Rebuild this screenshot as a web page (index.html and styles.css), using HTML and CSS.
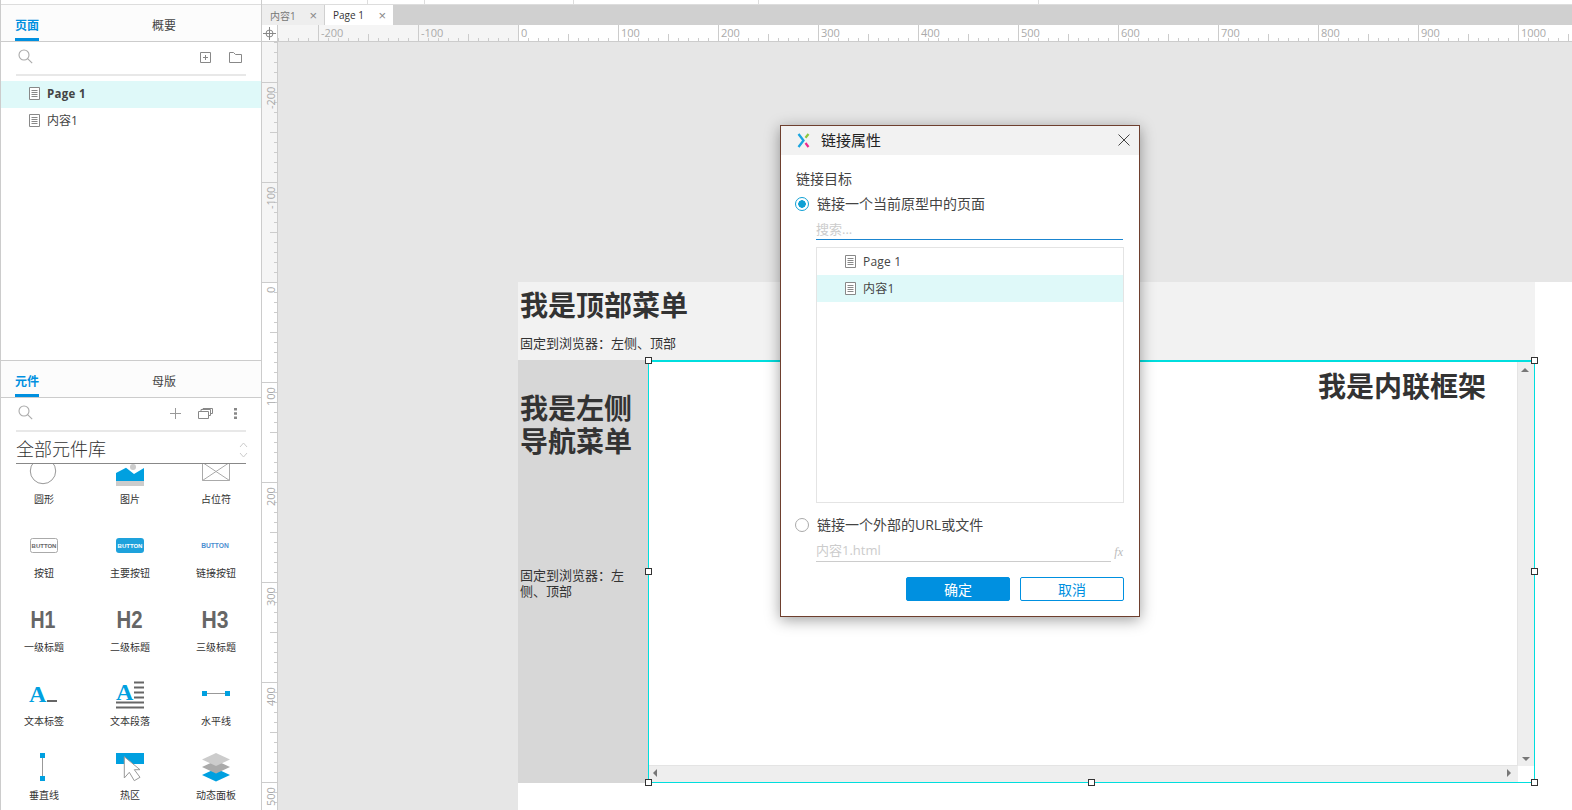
FILE: index.html
```html
<!DOCTYPE html>
<html lang="zh-CN">
<head>
<meta charset="utf-8">
<title>链接属性</title>
<link rel="stylesheet" href="styles.css">
</head>
<body>
<svg class="defs" width="0" height="0">
  <symbol id="doc" viewBox="0 0 11 13"><path d="M.5.5h10v12H.5z" fill="#fff" stroke="#888"/><path d="M2.5 3.5h6M2.5 5.5h6M2.5 7.5h6M2.5 9.5h6" stroke="#888" fill="none"/></symbol>
  <symbol id="search" viewBox="0 0 15 15"><circle cx="6" cy="6" r="5" fill="none" stroke="#aaa" stroke-width="1.1"/><path d="M9.6 9.6l4.6 4.6" stroke="#aaa" stroke-width="1.1"/></symbol>
</svg>
<div class="app">
  <aside class="rail">
    <div class="railtop"></div>
    <section class="pages">
      <div class="tabs"><span class="tab on">页面</span><span class="tab">概要</span></div>
      <div class="tools">
        <svg class="ic15" viewBox="0 0 15 15"><use href="#search"/></svg>
        <span class="spacer"></span>
        <svg class="tool1" width="11" height="11" viewBox="0 0 11 11"><path d="M.5.5h10v10H.5z" fill="none" stroke="#888"/><path d="M5.5 3v5M3 5.5h5" stroke="#888"/></svg>
        <svg class="tool2" width="13" height="11" viewBox="0 0 13 11"><path d="M.5 10.5V.5h4l2 2h6v8z" fill="none" stroke="#888"/></svg>
      </div>
      <div class="row sel"><svg class="doc" width="11" height="13"><use href="#doc"/></svg><b>Page 1</b></div>
      <div class="row"><svg class="doc" width="11" height="13"><use href="#doc"/></svg><span>内容1</span></div>
    </section>
    <section class="lib">
      <div class="tabs"><span class="tab on">元件</span><span class="tab">母版</span></div>
      <div class="tools">
        <svg class="ic15" viewBox="0 0 15 15"><use href="#search"/></svg>
        <span class="spacer"></span>
        <svg class="tool3" width="11" height="11" viewBox="0 0 11 11"><path d="M5.5 0v11M0 5.5h11" stroke="#999"/></svg>
        <svg class="tool4" width="15" height="11" viewBox="0 0 15 11"><path d="M.5 3.5h10v7H.5zM3 3.5V1.5h9.500v6H10.500M5 1.500V.5h9.500v5h-2" fill="none" stroke="#888"/></svg>
        <svg class="tool5" width="3" height="11" viewBox="0 0 3 11"><path d="M0 0h3v2.500H0zM0 4.200h3v2.500H0zM0 8.500h3V11H0z" fill="#888"/></svg>
      </div>
      <div class="select"><span>全部元件库</span>
        <svg width="9" height="16" viewBox="0 0 9 16"><path d="M1 5l3.500-4L8 5M1 11l3.500 4L8 11" fill="none" stroke="#ccc"/></svg>
      </div>
      <div class="scroll">
        <div class="grid">
          <div class="item"><svg viewBox="1 0 30 34"><circle cx="15" cy="17" r="12.700" fill="none" stroke="#999"/></svg><span>圆形</span></div>
          <div class="item"><svg viewBox="1 0 30 34"><circle cx="19" cy="13" r="3" fill="#ccc"/><path d="M2 19l10-5.300L20 20l10-6v13H2z" fill="#00a0e0"/><path d="M2 27h28v5H2z" fill="#ccc"/></svg><span>图片</span></div>
          <div class="item"><svg viewBox="1 0 30 34"><path d="M2.500 8.500h27v18h-27zM2.500 8.500l27 18M29.500 8.500l-27 18" fill="none" stroke="#aaa"/></svg><span>占位符</span></div>

          <div class="item"><svg viewBox="1 0 30 34"><rect x="2.500" y="10.500" width="27" height="14" rx="2" fill="#fff" stroke="#aaa"/><text class="btxt" x="16" y="19.800" fill="#666">BUTTON</text></svg><span>按钮</span></div>
          <div class="item"><svg viewBox="1 0 30 34"><rect x="2" y="10" width="28" height="15" rx="3" fill="#1ea2dc"/><text class="btxt" x="16" y="20" fill="#fff">BUTTON</text></svg><span>主要按钮</span></div>
          <div class="item"><svg viewBox="1 0 30 34"><text class="btxt lnk" x="15" y="19.800" fill="#4a8ed0">BUTTON</text></svg><span>链接按钮</span></div>

          <div class="item"><svg viewBox="1 0 30 34"><text class="htxt" x="15" y="26" textLength="25" lengthAdjust="spacingAndGlyphs">H1</text></svg><span>一级标题</span></div>
          <div class="item"><svg viewBox="1 0 30 34"><text class="htxt" x="15.500" y="26" textLength="26" lengthAdjust="spacingAndGlyphs">H2</text></svg><span>二级标题</span></div>
          <div class="item"><svg viewBox="1 0 30 34"><text class="htxt" x="15" y="26" textLength="27" lengthAdjust="spacingAndGlyphs">H3</text></svg><span>三级标题</span></div>

          <div class="item"><svg viewBox="1 0 30 34"><text class="atxt" x="1" y="26">A</text><path d="M19 24h10v2H19z" fill="#666"/></svg><span>文本标签</span></div>
          <div class="item"><svg viewBox="1 0 30 34"><text class="atxt" x="2" y="24">A</text><path d="M20 5.500h10v2H20zM20 10.500h10v2H20zM20 15.500h10v2H20zM20 20.500h10v2H20zM2 25.500h28v2H2zM2 30.500h28v2H2z" fill="#666"/></svg><span>文本段落</span></div>
          <div class="item"><svg viewBox="1 0 30 34"><path d="M4 17.500h24" stroke="#999"/><path d="M2 15h5v5H2zM25 15h5v5h-5z" fill="#00a0e0"/></svg><span>水平线</span></div>

          <div class="item"><svg viewBox="1 0 30 34"><path d="M14.500 6v24" stroke="#999"/><path d="M12 3h5v5h-5zM12 26h5v5h-5z" fill="#00a0e0"/></svg><span>垂直线</span></div>
          <div class="item"><svg viewBox="1 0 30 34"><path d="M2 3h28v11H2z" fill="#00a0e0"/><path d="M10.300 6.700V28l5-5.700 5 8.400 5.700-3.400-5.700-7.600H26z" fill="#fff" stroke="#999"/></svg><span>热区</span></div>
          <div class="item"><svg viewBox="1 0 30 34"><path d="M2 25l14-6.500L30 25l-14 6.500z" fill="#00a0e0"/><path d="M2 17l14-6.500L30 17l-14 6.500z" fill="#aaa"/><path d="M2 9.500L16 3l14 6.500L16 16z" fill="#ccc"/></svg><span>动态面板</span></div>
        </div>
      </div>
    </section>
  </aside>

  <main class="work">
    <div class="strip"><i class="s1"></i><i class="s2"></i><i class="s3"></i><i class="s4"></i><i class="s5"></i></div>
    <div class="doctabs">
      <div class="dtab"><span>内容1</span><em>×</em></div>
      <div class="dtab cur"><span>Page 1</span><em>×</em></div>
    </div>
    <div class="rulerrow">
      <div class="corner"><svg width="13" height="13" viewBox="0 0 13 13"><circle cx="6.500" cy="6.500" r="3.500" fill="none" stroke="#888"/><path d="M6.500 0v13M0 6.500h13" stroke="#888"/></svg></div>
      <div class="hruler">
        <span>-200</span><span>-100</span><span>0</span><span>100</span><span>200</span><span>300</span><span>400</span><span>500</span><span>600</span><span>700</span><span>800</span><span>900</span><span>1000</span>
      </div>
    </div>
    <div class="stage">
      <div class="vruler">
        <span>-200</span><span>-100</span><span>0</span><span>100</span><span>200</span><span>300</span><span>400</span><span>500</span>
      </div>
      <div class="canvas">
        <div class="page">
          <div class="topbar">
            <h2>我是顶部菜单</h2>
            <p>固定到浏览器：左侧、顶部</p>
          </div>
          <div class="pagerow">
            <div class="nav">
              <h2>我是左侧<br>导航菜单</h2>
              <p>固定到浏览器：左侧、顶部</p>
            </div>
            <div class="frame">
              <h2>我是内联框架</h2>
              <div class="vbar"><i class="up"></i><i class="down"></i></div>
              <div class="hbar"><i class="left"></i><i class="right"></i></div>
              <i class="h tl"></i><i class="h tr"></i><i class="h ml"></i><i class="h mr"></i><i class="h bl"></i><i class="h bm"></i><i class="h br"></i>
            </div>
          </div>
        </div>
      </div>
    </div>
  </main>
</div>

<div class="dialog">
  <header class="dlghead">
    <svg class="logo" width="13" height="15" viewBox="0 0 13 15"><path d="M1.500 1L6.500 7.500 1.500 14" fill="none" stroke="#1aa5e0" stroke-width="2.300"/><path d="M11.500 1L8.500 4.800" fill="none" stroke="#8cc63f" stroke-width="2.200"/><path d="M8.500 10l3 4" fill="none" stroke="#ec2a8c" stroke-width="2.200"/></svg>
    <span class="dlgtitle">链接属性</span>
    <svg class="close" width="12" height="12" viewBox="0 0 12 12"><path d="M.5.500l11 11M11.500.500l-11 11" stroke="#444"/></svg>
  </header>
  <div class="dlgbody">
    <div class="lbl">链接目标</div>
    <div class="radio"><i class="dot on"></i><span>链接一个当前原型中的页面</span></div>
    <div class="field active">搜索...</div>
    <div class="tree">
      <div class="node"><svg class="doc" width="11" height="13"><use href="#doc"/></svg><span>Page 1</span></div>
      <div class="node sel"><svg class="doc" width="11" height="13"><use href="#doc"/></svg><span>内容1</span></div>
    </div>
    <div class="radio second"><i class="dot"></i><span>链接一个外部的URL或文件</span></div>
    <div class="urlrow"><div class="field url">内容1.html</div><span class="fx">fx</span></div>
    <div class="btns"><button class="btn primary">确定</button><button class="btn">取消</button></div>
  </div>
</div>
</body>
</html>
```
FILE: styles.css
```css
* { box-sizing: border-box; }
html, body { margin: 0; height: 810px; overflow: hidden; background: #fff; }
body { font-family: "Open Sans", "Noto Sans CJK SC", sans-serif; color: #333; font-size: 12px; position: relative; }
.defs { position: absolute; }
.app { display: flex; width: 1572px; height: 810px; }

/* left rail */
.rail { width: 262px; flex: none; display: flex; flex-direction: column; border-left: 1px solid #ccc; border-right: 1px solid #ccc; background: #fff; }
.railtop { height: 5px; border-bottom: 1px solid #ddd; flex: none; }
.pages { height: 356px; flex: none; border-bottom: 1px solid #ccc; }
.tabs { height: 37px; display: flex; background: #fcfcfc; border-bottom: 1px solid #ccc; padding-left: 14px; }
.tab { width: 24px; margin-right: 113px; font-size: 12px; line-height: 42px; height: 36px; white-space: nowrap; color: #444; }
.tab.on { color: #0090e0; border-bottom: 3px solid #0090e0; font-weight: 700; }
.tools { height: 34px; margin: 0 15px; display: flex; align-items: center; border-bottom: 2px solid #e8e8e8; padding: 0 4px 2px 2px; }
.ic15 { width: 15px; height: 15px; margin-top: -2px; }
.spacer { flex: 1; }
.tool2 { margin-left: 18px; }
.tool4 { margin-left: 17px; }
.tool5 { margin-left: 21px; margin-right: 5px; }
.row { height: 27px; display: flex; align-items: center; padding: 0 0 2px 28px; font-size: 11.500px; line-height: 16px; color: #444; }
.pages .tools + .row { margin-top: 5px; }
.row.sel { background: #dff9f9; }
.row b { font-weight: 700; letter-spacing: .3px; }
.row span { font-size: 12px; }
.doc { flex: none; margin-right: 7px; }
.lib { flex: 1; display: flex; flex-direction: column; min-height: 0; }
.select { height: 32px; margin: 0 15px; border-bottom: 1px solid #888; display: flex; align-items: center; justify-content: space-between; font-size: 18px; font-weight: 300; color: #333; flex: none; }
.select svg { margin-right: -2px; margin-top: 4px; }
.scroll { flex: 1; overflow: hidden; min-height: 0; }
.grid { margin-top: -10px; display: grid; grid-template-columns: repeat(3, 86px); grid-auto-rows: 74px; }
.item { display: flex; flex-direction: column; align-items: center; }
.item svg { width: 30px; height: 34px; flex: none; overflow: visible; }
.item span { font-size: 10px; line-height: 14px; margin-top: 4px; color: #333; }
.btxt { font: 700 6px "Liberation Sans", sans-serif; text-anchor: middle; }
.btxt.lnk { font-size: 6.700px; }
.htxt { font: 700 24px "Liberation Sans", sans-serif; text-anchor: middle; fill: #666; }
.atxt { font: 700 24px "Liberation Serif", serif; fill: #00a0e0; }

/* workspace */
.work { flex: 1; min-width: 0; display: flex; flex-direction: column; }
.strip { height: 5px; flex: none; display: flex; border-bottom: 1px solid #ddd; }
.strip i { display: block; border-right: 1px solid #ddd; height: 4px; }
.s1 { width: 106px; }
.s2 { width: 57px; }
.s3 { width: 149px; }
.s4 { width: 185px; }
.s5 { width: 280px; }
.doctabs { height: 20px; flex: none; background: #d0d0d0; display: flex; }
.dtab { width: 62px; background: #eee; color: #777; display: flex; align-items: center; justify-content: space-between; padding: 0 7px 0 8px; font-size: 10px; margin-right: 1px; }
.dtab.cur { width: 68px; background: #fff; color: #333; }
.dtab em { font: normal 13px "Liberation Sans", sans-serif; color: #888; }
.rulerrow { height: 17px; flex: none; display: flex; border-bottom: 1px solid #ccc; }
.corner { width: 16px; flex: none; background: #fff; border-right: 1px solid #ccc; display: flex; align-items: center; justify-content: center; }
.hruler { flex: 1; display: flex; overflow: hidden; padding-left: 40px; color: #aaa; font-size: 11px; line-height: 15px;
  background:
    linear-gradient(90deg, #ccc 1px, transparent 1px) 40px 0 / 100px 100% repeat-x,
    linear-gradient(90deg, #ccc 1px, transparent 1px) 90px 100% / 100px 7px repeat-x,
    linear-gradient(90deg, #ccc 1px, transparent 1px) 0 100% / 10px 3px repeat-x,
    linear-gradient(90deg, #f5f5f5 240px, #fff 240px);
}
.hruler span { width: 100px; flex: none; padding-left: 3px; }
.stage { flex: 1; display: flex; min-height: 0; }
.vruler { width: 16px; flex: none; overflow: hidden; padding-top: 40px; border-right: 1px solid #ccc; color: #aaa; font-size: 11px;
  background:
    linear-gradient(#ccc 1px, transparent 1px) 0 40px / 100% 100px repeat-y,
    linear-gradient(#ccc 1px, transparent 1px) 100% 90px / 7px 100px repeat-y,
    linear-gradient(#ccc 1px, transparent 1px) 100% 0 / 3px 10px repeat-y,
    linear-gradient(#f5f5f5 240px, #fff 240px);
}
.vruler span { display: block; height: 100px; writing-mode: vertical-rl; transform: rotate(180deg); text-align: right; padding: 0 2px 5px 0; line-height: 13px; white-space: nowrap; }
.canvas { flex: 1; min-width: 0; background: #e6e6e6; display: flex; overflow: hidden; }
.page { flex: 1; margin: 240px 0 0 240px; background: #fff; }
.page h2 { margin: 0; font-size: 28px; line-height: 33px; font-weight: 700; color: #333; }
.page p { margin: 0; font-size: 13px; line-height: 16px; color: #333; }
.topbar { width: 1017px; height: 78px; background: #f2f2f2; padding: 7px 2px 0; }
.topbar p { margin-top: 13px; }
.pagerow { display: flex; height: 423px; }
.nav { width: 130px; flex: none; background: #d7d7d7; padding: 32px 14px 0 2px; }
.nav p { margin-top: 109px; }
.frame { position: relative; width: 887px; flex: none; border: 1px solid #00dede; border-top-width: 2px; background: #fff; }
.frame h2 { position: absolute; left: 669px; top: 8px; white-space: nowrap; }
.vbar { position: absolute; right: 0; top: 0; bottom: 16px; width: 17px; background: #eee; border-left: 1px solid #e4e4e4; }
.hbar { position: absolute; left: 0; bottom: 0; right: 16px; height: 17px; background: #eee; border-top: 1px solid #e4e4e4; }
.up, .down, .left, .right { position: absolute; width: 0; height: 0; border: 4.500px solid transparent; }
.up { border-bottom-color: #777; top: 2px; left: 3px; }
.down { border-top-color: #777; bottom: 1px; left: 4px; }
.left { border-right-color: #777; left: 0; top: 3px; }
.right { border-left-color: #777; right: 3px; top: 3px; }
.h { position: absolute; width: 7px; height: 7px; border: 1px solid #333; background: #fff; z-index: 2; }
.tl { left: -4px; top: -5px; }
.tr { right: -4px; top: -5px; }
.ml { left: -4px; top: 206px; }
.mr { right: -4px; top: 206px; }
.bl { left: -4px; bottom: -4px; }
.bm { left: 439px; bottom: -4px; }
.br { right: -4px; bottom: -4px; }

/* dialog */
.dialog { position: absolute; left: 780px; top: 125px; width: 360px; height: 492px; background: #fff; border: 1px solid #6e3f2e; box-shadow: 0 3px 14px rgba(0,0,0,.38); z-index: 5; }
.dlghead { height: 29px; background: #f2f2f2; display: flex; align-items: center; padding: 0 9px 3px 16px; }
.logo { margin-top: 2px; margin-right: 11px; }
.close { margin-top: 2px; }
.dlgtitle { font-size: 15px; color: #222; flex: 1; }
.dlgbody { padding: 14px 15px 0; }
.lbl { font-size: 14px; line-height: 20px; color: #444; }
.radio { display: flex; align-items: center; margin-top: 5px; font-size: 14px; line-height: 20px; color: #444; }
.radio.second { margin-top: 12px; }
.dot { width: 14px; height: 14px; border-radius: 50%; border: 1px solid #aaa; background: #fff; margin: 0 8px 0 -1px; flex: none; }
.dot.on { border: 1.500px solid #0fa0d4; background: radial-gradient(circle, #0fa0d4 3.500px, #fff 4px); }
.field { margin-left: 20px; height: 24px; color: #ccc; font-size: 13px; line-height: 24px; border-bottom: 1px solid #ccc; }
.field.active { margin-top: 2px; border-bottom: 1.500px solid #1a85d0; line-height: 26px; width: 307px; }
.tree { margin: 7px 0 0 20px; width: 308px; height: 256px; border: 1px solid #e4e4e4; }
.node { height: 27px; display: flex; align-items: center; padding-left: 28px; font-size: 12px; color: #444; letter-spacing: .2px; }
.node.sel { background: #dff9f9; }
.node.sel span { margin-bottom: 2px; }
.urlrow { display: flex; align-items: flex-end; margin-top: 3px; }
.field.url { flex: 1; }
.fx { width: 13px; text-align: right; font: italic 12px "Liberation Serif", serif; color: #bbb; margin-bottom: 2px; padding-right: 1px; }
.btns { display: flex; justify-content: flex-end; gap: 10px; margin-top: 15px; }
.btn { width: 104px; height: 24px; padding: 0; border: 1px solid #0090e0; border-radius: 2px; background: #fff; color: #0090e0; font: 14px "Open Sans", "Noto Sans CJK SC", sans-serif; }
.btn.primary { background: #0090e0; color: #fff; }
```
